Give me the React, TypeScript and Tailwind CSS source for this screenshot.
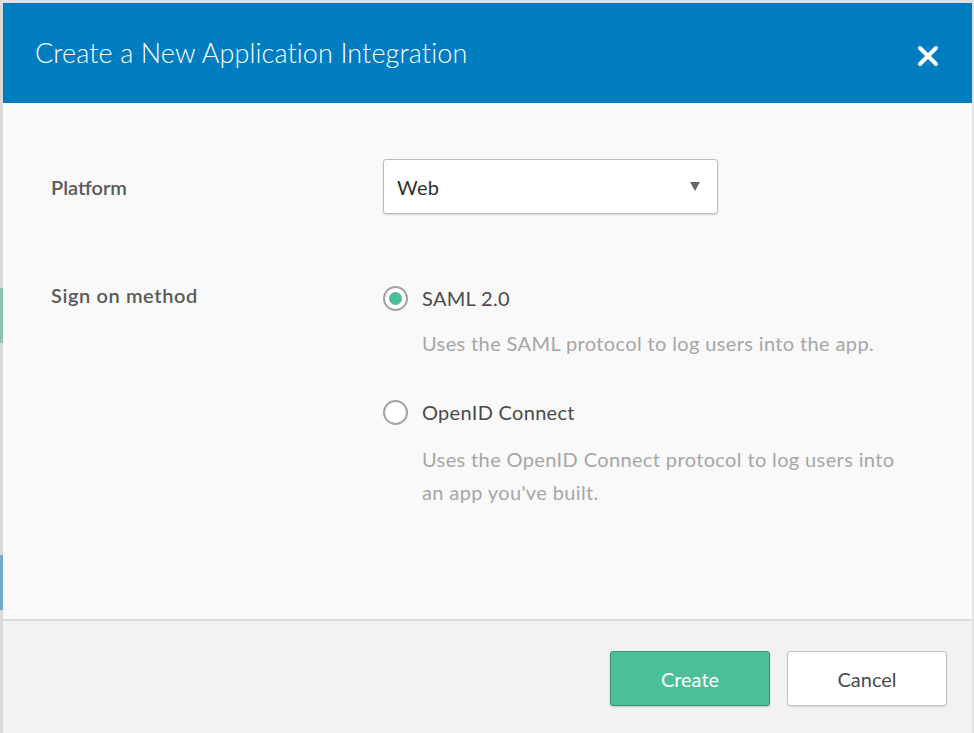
import { X } from 'lucide-react';

const font = { fontFamily: 'Lato, "Open Sans", sans-serif' };

function Radio({ checked }: { checked: boolean }) {
  return (
    <span className="flex h-[25px] w-[25px] shrink-0 items-center justify-center rounded-full border-2 border-[#a3a3a3] bg-white">
      {checked && <span className="h-[13px] w-[13px] rounded-full bg-[#4cbf97]" />}
    </span>
  );
}

export default function App() {
  return (
    <div className="flex h-[733px] w-[974px] overflow-hidden bg-[#e2e2e2]" style={font}>
      {/* page behind the modal, peeking out on the left */}
      <div className="flex w-[3px] shrink-0 flex-col bg-[#dadada]">
        <div className="h-[288px]" />
        <div className="h-[55px] bg-[#8cc4ae]" />
        <div className="h-[212px]" />
        <div className="h-[55px] bg-[#74a9c8]" />
      </div>

      <div className="mt-[3px] flex w-[969px] shrink-0 flex-col">
        {/* Header */}
        <div className="flex h-[100px] items-center justify-between bg-[#007dc1] pl-[32px] pr-[28px]">
          <h1 className="text-[27px] font-light tracking-[0.1px] text-white">
            Create a New Application Integration
          </h1>
          <X className="mt-[5px] h-[32px] w-[32px] text-white" strokeWidth={3} />
        </div>

        {/* Body */}
        <div className="flex h-[516px] flex-col bg-[#f9f9f9] pt-[56px]">
          <div className="flex items-center">
            <div className="w-[380px] pl-[48px] text-[20px] font-semibold text-[#5a5a5a]">Platform</div>
            <div className="flex h-[55px] w-[335px] items-center justify-between rounded-[3px] border border-[#bdbdbd] bg-white pl-[13px] pr-[17px] shadow-[0_1px_2px_rgba(0,0,0,0.15)]">
              <span className="text-[20px] tracking-[0.3px] text-[#2f2f2f]">Web</span>
              <svg width="10" height="9" viewBox="0 0 10 9">
                <path d="M0 0 H10 L5 9 Z" fill="#666" />
              </svg>
            </div>
          </div>

          <div className="mt-[69px] flex">
            <div className="w-[380px] pl-[48px] text-[20px] font-semibold leading-[25px] tracking-[0.6px] text-[#5a5a5a]">
              Sign on method
            </div>
            <div className="flex flex-col">
              <div className="flex items-center gap-[14px]">
                <Radio checked />
                <span className="text-[20px] tracking-[0.3px] text-[#4a4a4a]">SAML 2.0</span>
              </div>
              <p className="mt-[14px] w-[520px] pl-[39px] text-[20px] leading-[33px] tracking-[0.37px] text-[#a6a6a6]">
                Uses the SAML protocol to log users into the app.
              </p>
              <div className="mt-[37px] flex items-center gap-[14px]">
                <Radio checked={false} />
                <span className="text-[20px] tracking-[0.3px] text-[#4a4a4a]">OpenID Connect</span>
              </div>
              <p className="mt-[16px] w-[520px] pl-[39px] text-[20px] leading-[33px] tracking-[0.37px] text-[#a6a6a6]">
                Uses the OpenID Connect protocol to log users into an app you've built.
              </p>
            </div>
          </div>
        </div>

        {/* Footer */}
        <div className="flex flex-1 justify-end gap-[17px] border-t-2 border-[#dcdcdc] bg-[#f2f2f2] pr-[25px] pt-[30px]">
          <button className="h-[55px] w-[160px] rounded-[3px] border border-[#3b8f72] bg-[#4cbe98] text-[20px] text-white shadow-[0_1px_2px_rgba(0,0,0,0.2)]">
            Create
          </button>
          <button className="h-[55px] w-[160px] rounded-[3px] border border-[#c2c2c2] bg-white text-[20px] text-[#4a4a4a] shadow-[0_1px_2px_rgba(0,0,0,0.1)]">
            Cancel
          </button>
        </div>
      </div>
    </div>
  );
}
